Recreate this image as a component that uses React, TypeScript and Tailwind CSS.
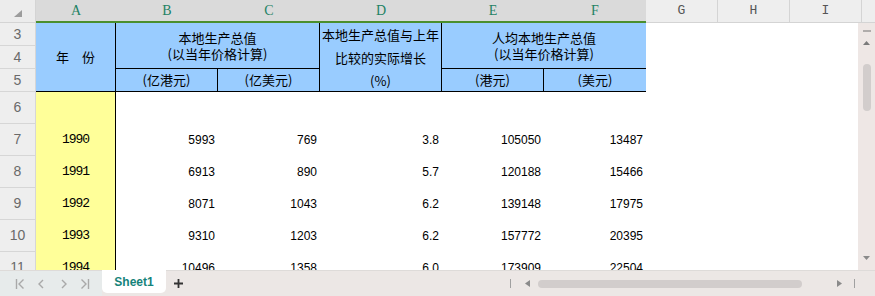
const ROW_START = [
  'row-start-1',
  'row-start-2',
  'row-start-3',
  'row-start-4',
  'row-start-5',
  'row-start-6',
  'row-start-7',
  'row-start-8',
  'row-start-9',
];
const NUM_COL = ['col-start-3', 'col-start-4', 'col-start-5', 'col-start-6', 'col-start-7'];

const data = [
  null,
  ['1990', '5993', '769', '3.8', '105050', '13487'],
  ['1991', '6913', '890', '5.7', '120188', '15466'],
  ['1992', '8071', '1043', '6.2', '139148', '17975'],
  ['1993', '9310', '1203', '6.2', '157772', '20395'],
  ['1994', '10496', '1358', '6.0', '173909', '22504'],
];

const cjk = "font-['Noto_Sans_CJK_SC',sans-serif] text-[13px] text-black";

function ColHeader() {
  const sel = [
    ['A', 'w-[80px]'],
    ['B', 'w-[102px]'],
    ['C', 'w-[102px]'],
    ['D', 'w-[122px]'],
    ['E', 'w-[102px]'],
    ['F', 'w-[102px]'],
  ];
  return (
    <div className="flex h-[23px] font-['Liberation_Mono',monospace] text-[13px]">
      <div className="relative w-[36px] shrink-0 border-r border-b border-[#d4d4d4] bg-[#ececec]">
        <svg className="absolute left-[14px] top-[10px]" width="8" height="7">
          <polygon points="8,0 8,7 0,7" fill="#9c9c9c" />
        </svg>
      </div>
      <div className="flex shrink-0 border-b-2 border-[#4b8f2e] bg-[#dadada]">
        {sel.map(([l, w]) => (
          <div
            key={l}
            className={`${w} flex items-center justify-center font-['Liberation_Serif',serif] text-[14px] text-[#1e8264]`}
          >
            {l}
          </div>
        ))}
      </div>
      {['G', 'H', 'I'].map((l) => (
        <div
          key={l}
          className="flex w-[72px] shrink-0 items-center justify-center border-r border-b border-[#d4d4d4] bg-[#eeeeee] text-[#555]"
        >
          {l}
        </div>
      ))}
      <div className="flex-1 border-b border-[#d4d4d4] bg-[#eeeeee]" />
    </div>
  );
}

function Sheet() {
  return (
    <div className="grid w-[858px] grid-cols-[36px_80px_102px_102px_122px_102px_102px_72px_72px_1fr] grid-rows-[23px_23px_23px_32px_32px_32px_32px_32px_32px] bg-white">
      {ROW_START.map((rs, i) => (
        <div
          key={rs}
          className={`${rs} col-start-1 flex items-center justify-center border-r border-b border-[#d6d6d6] bg-[#eeeeee] font-['Liberation_Sans',sans-serif] text-[14px] text-[#6a6a6a]`}
        >
          {i + 3}
        </div>
      ))}

      <div className={`col-start-2 row-start-1 row-span-3 flex items-center justify-center border-r border-b border-black bg-[#99ccff] ${cjk}`}>
        年　份
      </div>
      <div className={`col-start-3 col-span-2 row-start-1 row-span-2 flex flex-col items-center justify-center border-r border-b border-black bg-[#99ccff] leading-[16px] ${cjk}`}>
        <span>本地生产总值</span>
        <span>(以当年价格计算)</span>
      </div>
      <div className={`col-start-3 row-start-3 flex items-center justify-center border-r border-b border-black bg-[#99ccff] ${cjk}`}>
        (亿港元)
      </div>
      <div className={`col-start-4 row-start-3 flex items-center justify-center border-r border-b border-black bg-[#99ccff] ${cjk}`}>
        (亿美元)
      </div>
      <div className={`col-start-5 row-start-1 row-span-3 flex flex-col items-center border-r border-b border-black bg-[#99ccff] leading-[23px] ${cjk}`}>
        <span>本地生产总值与上年</span>
        <span>比较的实际增长</span>
        <span>(%)</span>
      </div>
      <div className={`col-start-6 col-span-2 row-start-1 row-span-2 flex flex-col items-center justify-center border-b border-black bg-[#99ccff] leading-[16px] ${cjk}`}>
        <span>人均本地生产总值</span>
        <span>(以当年价格计算)</span>
      </div>
      <div className={`col-start-6 row-start-3 flex items-center justify-center border-r border-b border-black bg-[#99ccff] ${cjk}`}>
        (港元)
      </div>
      <div className={`col-start-7 row-start-3 flex items-center justify-center border-b border-black bg-[#99ccff] ${cjk}`}>
        (美元)
      </div>

      {data.map((row, r) => (
        <div key={r} className="contents">
          <div
            className={`${ROW_START[r + 3]} col-start-2 flex items-center justify-center border-r border-black bg-[#ffff99] font-['Liberation_Mono',monospace] text-[13px] tracking-[-1px] text-black`}
          >
            {row ? row[0] : ''}
          </div>
          {row &&
            row.slice(1).map((v, c) => (
              <div
                key={c}
                className={`${ROW_START[r + 3]} ${NUM_COL[c]} flex items-center justify-end pr-[3px] font-['Liberation_Sans',sans-serif] text-[12px] text-black`}
              >
                {v}
              </div>
            ))}
        </div>
      ))}
    </div>
  );
}

function VScroll() {
  return (
    <div className="flex w-[17px] flex-col items-center bg-[#eee7e5] pt-[7px]">
      <div className="h-[2px] w-[8px] bg-[#b0acab]" />
      <svg className="mt-[9px]" width="7" height="4">
        <polygon points="3.5,0 7,4 0,4" fill="#7a7a7a" />
      </svg>
      <div className="mt-[19px] h-[47px] w-[8px] rounded-full bg-[#d2cdcc]" />
      <div className="flex-1" />
      <svg className="mb-[10px]" width="7" height="4">
        <polygon points="0,0 7,0 3.5,4" fill="#8a8a8a" />
      </svg>
    </div>
  );
}

function NavIcon({ d }: { d: string }) {
  return (
    <svg width="10" height="12" viewBox="0 0 10 12">
      <path d={d} fill="none" stroke="#a9a9a9" strokeWidth="1.4" />
    </svg>
  );
}

function TabBar() {
  return (
    <div className="flex h-[26px] border-t border-[#dedbd9] bg-[#ece7e5]">
      <div className="flex h-full items-center bg-[#e7ebeb] pl-[15px]">
        <NavIcon d="M1.5 1 V11 M8.5 1.5 L4 6 L8.5 10.5" />
        <div className="ml-[12px]">
          <NavIcon d="M6 2 L2 6 L6 10" />
        </div>
        <div className="ml-[13px]">
          <NavIcon d="M2 2 L6 6 L2 10" />
        </div>
        <div className="ml-[10px]">
          <NavIcon d="M1.5 1.5 L6 6 L1.5 10.5 M8.5 1 V11" />
        </div>
        <div className="w-[12px]" />
      </div>
      <div className="-mt-px flex h-[23px] w-[64px] items-center justify-center rounded-b-[5px] bg-white font-['Liberation_Sans',sans-serif] text-[12px] font-bold text-[#15837a]">
        Sheet1
      </div>
      <div className="ml-[7px] flex items-center">
        <svg width="11" height="11">
          <path d="M5.5 1 V10 M1 5.5 H10" stroke="#333" strokeWidth="1.8" />
        </svg>
      </div>
      <div className="ml-auto flex w-[370px] items-center">
        <div className="ml-[5px] h-[9px] w-px bg-[#a0a0a0]" />
        <svg className="ml-[14px]" width="5" height="7">
          <polygon points="5,0 5,7 0,3.5" fill="#8a8a8a" />
        </svg>
        <div className="ml-[8px] h-[8px] w-[264px] rounded-full bg-[#d2cdcc]" />
        <svg className="ml-[35px]" width="5" height="7">
          <polygon points="0,0 5,3.5 0,7" fill="#8a8a8a" />
        </svg>
        <div className="ml-[12px] h-[9px] w-px bg-[#a0a0a0]" />
      </div>
    </div>
  );
}

export default function App() {
  return (
    <div className="flex h-[296px] w-[875px] flex-col overflow-hidden bg-white">
      <ColHeader />
      <div className="flex h-[247px] overflow-hidden">
        <Sheet />
        <VScroll />
      </div>
      <TabBar />
    </div>
  );
}
